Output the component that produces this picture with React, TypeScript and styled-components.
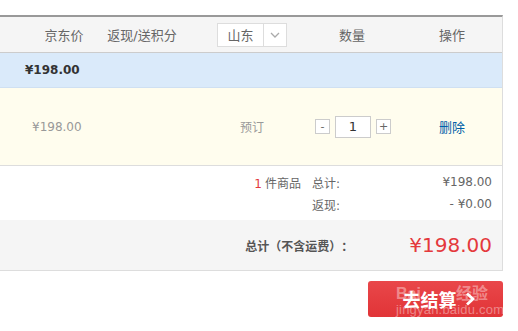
import React from 'react'
import styled, { createGlobalStyle } from 'styled-components'

const GlobalStyle = createGlobalStyle`
  body {
    margin: 0;
    background: #fff;
    font-family: "DejaVu Sans", "Noto Sans CJK SC", sans-serif;
    font-size: 12px;
    color: #666;
    text-spacing-trim: space-all;
  }
`

const Page = styled.div`
  width: 503px;
  padding-top: 15px;
`

const Table = styled.div`
  border-top: 2px solid #999;
  border-right: 1px solid #ddd;
`

const Columns = styled.div`
  display: grid;
  grid-template-columns: 80px 76px 144px 56px 122px;
  padding-left: 24px;
  align-items: center;
  justify-items: center;
`

const Header = styled(Columns)`
  height: 35px;
  background: #f5f5f5;
  border-bottom: 1px solid #ccc;
  font-size: 13px;
  color: #666;
`

const LastCell = styled.div`
  padding-left: 22px;
  width: 100%;
  box-sizing: border-box;
  text-align: center;
`

const Select = styled.div`
  display: flex;
  width: 70px;
  height: 24px;
  box-sizing: border-box;
  border: 1px solid #ddd;
  background: #fff;
`

const SelectText = styled.div`
  flex: 1;
  display: flex;
  align-items: center;
  justify-content: center;
  font-size: 13px;
  color: #666;
  border-right: 1px solid #ddd;
`

const SelectArrow = styled.div`
  width: 22px;
  display: flex;
  align-items: center;
  justify-content: center;
`

const ShopRow = styled.div`
  height: 34px;
  display: flex;
  align-items: center;
  padding-left: 25px;
  background: #daeafa;
  border-bottom: 1px solid #cfe0f2;
  font-weight: bold;
  color: #333;
`

const ItemRow = styled(Columns)`
  height: 77px;
  background: #fffdee;
  border-bottom: 1px solid #ddd;
  color: #999;
`

const ItemPrice = styled.div`
  justify-self: start;
  padding-left: 8px;
`

const Quantity = styled.div`
  display: flex;
  align-items: center;
  gap: 5px;
  margin-left: 2px;
`

const QtyButton = styled.div`
  width: 15px;
  height: 15px;
  box-sizing: border-box;
  border: 1px solid #ccc;
  background: #fff;
  display: flex;
  align-items: center;
  justify-content: center;
  font-size: 11px;
  color: #666;
  line-height: 1;
`

const QtyInput = styled.div`
  width: 36px;
  height: 22px;
  box-sizing: border-box;
  border: 1px solid #ccc;
  background: #fff;
  display: flex;
  align-items: center;
  justify-content: center;
  font-size: 13px;
  color: #333;
`

const DeleteLink = styled.a`
  color: #005ea7;
  font-size: 13px;
  text-decoration: none;
`

const Summary = styled.div`
  padding: 5px 10px 5px 0;
  display: grid;
  grid-template-columns: 1fr 60px 120px;
  grid-auto-rows: 22px;
  align-items: center;
`

const Count = styled.div`
  justify-self: end;
  padding-right: 11px;
`

const Red = styled.span`
  color: #e4393c;
  margin-right: 3px;
`

const Amount = styled.div`
  text-align: right;
`

const TotalRow = styled.div`
  height: 50px;
  background: #f5f5f5;
  border-bottom: 1px solid #ddd;
  display: flex;
  align-items: center;
  justify-content: flex-end;
  gap: 56px;
  padding-right: 10px;
`

const TotalLabel = styled.div`
  font-weight: bold;
  color: #555;
`

const TotalPrice = styled.div`
  font-size: 20px;
  color: #e4393c;
`

const Actions = styled.div`
  display: flex;
  justify-content: flex-end;
  padding-top: 10px;
`

const CheckoutButton = styled.a`
  position: relative;
  width: 135px;
  height: 36px;
  box-sizing: border-box;
  padding-left: 6px;
  border-radius: 3px;
  background: linear-gradient(#e9474a, #e13437);
  display: flex;
  align-items: center;
  justify-content: center;
  gap: 8px;
  color: #fff;
  font-size: 18px;
  font-weight: bold;
  text-decoration: none;
  overflow: hidden;
`

const Watermark = styled.div`
  position: absolute;
  left: 28px;
  top: 4px;
  width: 100px;
  color: rgba(255, 255, 255, 0.4);
  font-family: "Liberation Sans", "Noto Sans CJK SC", sans-serif;
  font-weight: normal;
  pointer-events: none;
`

const WatermarkLogo = styled.div`
  display: flex;
  justify-content: space-between;
  padding-right: 8px;
  font-size: 16px;
  font-weight: bold;
  line-height: 18px;
`

const WatermarkUrl = styled.div`
  font-size: 13px;
  line-height: 14px;
  letter-spacing: 0.2px;
`

export default function App() {
  return (
    <Page>
      <GlobalStyle />
      <Table>
        <Header>
          <div>京东价</div>
          <div>返现/送积分</div>
          <Select>
            <SelectText>山东</SelectText>
            <SelectArrow>
              <svg width="10" height="6" viewBox="0 0 10 6">
                <polyline points="1,1 5,5 9,1" fill="none" stroke="#aaa" strokeWidth="1.3" />
              </svg>
            </SelectArrow>
          </Select>
          <div>数量</div>
          <LastCell>操作</LastCell>
        </Header>
        <ShopRow>¥198.00</ShopRow>
        <ItemRow>
          <ItemPrice>¥198.00</ItemPrice>
          <div />
          <div>预订</div>
          <Quantity>
            <QtyButton>-</QtyButton>
            <QtyInput>1</QtyInput>
            <QtyButton>+</QtyButton>
          </Quantity>
          <LastCell>
            <DeleteLink href="#">删除</DeleteLink>
          </LastCell>
        </ItemRow>
        <Summary>
          <Count>
            <Red>1</Red>件商品
          </Count>
          <div>总计:</div>
          <Amount>¥198.00</Amount>
          <div />
          <div>返现:</div>
          <Amount>- ¥0.00</Amount>
        </Summary>
        <TotalRow>
          <TotalLabel>总计（不含运费）：</TotalLabel>
          <TotalPrice>¥198.00</TotalPrice>
        </TotalRow>
      </Table>
      <Actions>
        <CheckoutButton href="#">
          <span>去结算</span>
          <svg width="10" height="14" viewBox="0 0 10 14">
            <polyline points="2,1.5 8,7 2,12.5" fill="none" stroke="#fff" strokeWidth="2.8" />
          </svg>
          <Watermark>
            <WatermarkLogo>
              <span>Bai</span>
              <span>经验</span>
            </WatermarkLogo>
            <WatermarkUrl>jingyan.baidu.com</WatermarkUrl>
          </Watermark>
        </CheckoutButton>
      </Actions>
    </Page>
  )
}
